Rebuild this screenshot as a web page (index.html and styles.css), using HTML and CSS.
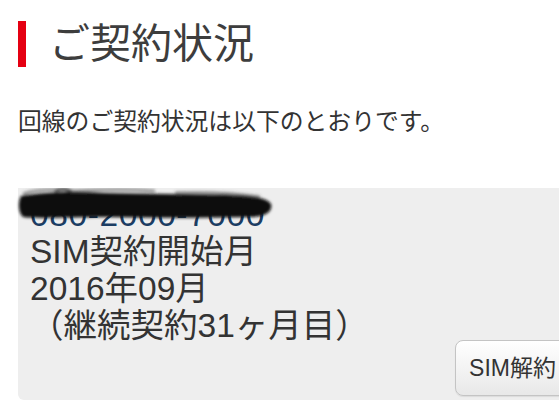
FILE: index.html
```html
<!DOCTYPE html>
<html lang="ja">
<head>
<meta charset="utf-8">
<title>ご契約状況</title>
<link rel="stylesheet" href="styles.css">
</head>
<body>
<div class="page">
  <h1 class="title"><span class="bar"></span><span class="title-text">ご契約状況</span></h1>
  <p class="lead">回線のご契約状況は以下のとおりです。</p>
  <div class="card">
    <div class="number">
      <span class="digits">080-2000-7000</span>
      <svg class="scribble" viewBox="0 0 262 38" width="262" height="38" aria-hidden="true">
        <defs>
          <filter id="blur" x="-10%" y="-40%" width="120%" height="180%">
            <feGaussianBlur stdDeviation="1.6"/>
          </filter>
        </defs>
        <g filter="url(#blur)">
          <path d="M6 8 C30 4 60 3 90 5 C130 6 170 6 210 7 C235 8 252 9 256 16 C258 24 250 29 236 29 C190 30 140 30 90 29 C55 29 25 31 8 29 C3 24 3 14 6 8 Z" fill="#0d0d0d"/>
          <path d="M8 6 C20 2 40 1 60 3 C80 2 110 1 140 3" stroke="#555" stroke-width="3" fill="none" opacity="0.6"/>
          <path d="M40 4 C45 0 52 0 56 4" stroke="#333" stroke-width="3" fill="none" opacity="0.7"/>
          <path d="M160 5 C190 4 220 5 245 9" stroke="#444" stroke-width="3" fill="none" opacity="0.6"/>
        </g>
      </svg>
    </div>
    <div class="line">SIM契約開始月</div>
    <div class="line">2016年09月</div>
    <div class="line">（継続契約31ヶ月目）</div>
    <div class="actions"><button class="btn" type="button">SIM解約</button></div>
  </div>
</div>
</body>
</html>
```

FILE: styles.css
```css
html, body {
  margin: 0;
  padding: 0;
  background: #ffffff;
  overflow: hidden;
}

.page {
  width: 559px;
  height: 415px;
  padding: 21px 0 0 18px;
  box-sizing: border-box;
  font-family: "Liberation Sans", "Noto Sans CJK JP", sans-serif;
  color: #333333;
}

.title {
  display: flex;
  align-items: center;
  gap: 23px;
  margin: 0;
  height: 46px;
  font-size: 41px;
  font-weight: 400;
  line-height: 46px;
  color: #3d3d3d;
}

.bar {
  display: block;
  width: 8px;
  height: 46px;
  background: #e50012;
}

.title-text {
  display: block;
}

.lead {
  margin: 39px 0 0 0;
  font-size: 23.8px;
  line-height: 32px;
  height: 32px;
  color: #333333;
}

.card {
  margin: 50px -21px 0 0;
  padding: 8px 8px 4px 12px;
  background: #eeeeee;
  border-radius: 0 0 6px 6px;
}

.number {
  position: relative;
  height: 37px;
  line-height: 37px;
  font-size: 33.5px;
}

.digits {
  display: block;
  color: #1c3d63;
  letter-spacing: 0.6px;
}

.scribble {
  position: absolute;
  left: -15px;
  top: -8px;
}

.line {
  height: 37px;
  line-height: 37px;
  font-size: 33.5px;
  white-space: nowrap;
  color: #333333;
}

.actions {
  display: flex;
  justify-content: flex-end;
  margin-top: -4px;
}

.btn {
  height: 56px;
  padding: 0 15px 0 13px;
  border: 1px solid #c4c4c4;
  border-radius: 8px;
  background: linear-gradient(#ffffff, #e8e8e8);
  box-shadow: 0 1px 1px rgba(0, 0, 0, 0.08);
  font-family: "Liberation Sans", "Noto Sans CJK JP", sans-serif;
  font-size: 23px;
  color: #333333;
  line-height: 1;
}
```
